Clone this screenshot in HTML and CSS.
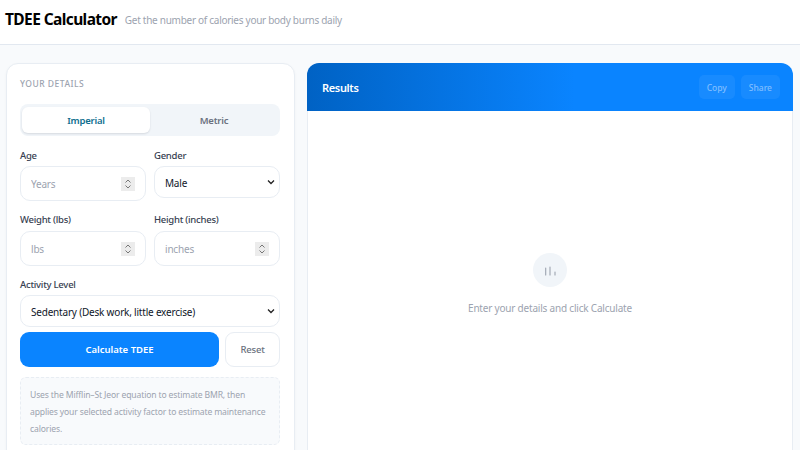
FILE: index.html
```html
<!DOCTYPE html>
<html lang="en">
<head>
<meta charset="UTF-8">
<title>TDEE Calculator</title>
<link rel="stylesheet" href="styles.css">
</head>
<body>
  <header class="topbar">
    <h1>TDEE Calculator</h1>
    <span class="tagline">Get the number of calories your body burns daily</span>
  </header>

  <main class="layout">
    <section class="details">
      <h2>YOUR DETAILS</h2>
      <div class="units">
        <button class="unit active">Imperial</button>
        <button class="unit">Metric</button>
      </div>

      <div class="row">
        <div class="field">
          <label>Age</label>
          <input type="number" placeholder="Years">
        </div>
        <div class="field">
          <label>Gender</label>
          <select><option>Male</option><option>Female</option></select>
        </div>
      </div>

      <div class="row">
        <div class="field">
          <label>Weight (lbs)</label>
          <input type="number" placeholder="lbs">
        </div>
        <div class="field">
          <label>Height (inches)</label>
          <input type="number" placeholder="inches">
        </div>
      </div>

      <div class="field">
        <label>Activity Level</label>
        <select class="activity"><option>Sedentary (Desk work, little exercise)</option></select>
      </div>

      <div class="actions">
        <button class="calc">Calculate TDEE</button>
        <button class="reset">Reset</button>
      </div>

      <p class="note">Uses the Mifflin–St Jeor equation to estimate BMR, then applies your selected activity factor to estimate maintenance calories.</p>
    </section>

    <section class="results">
      <div class="results-head">
        <h2>Results</h2>
        <div class="head-btns">
          <button>Copy</button>
          <button>Share</button>
        </div>
      </div>
      <div class="empty">
        <div class="empty-icon">
          <svg width="16" height="16" viewBox="0 0 16 16" fill="none" stroke="#9ca3af" stroke-width="1.1" stroke-linecap="round">
            <path d="M3.7 13V6"/><path d="M8 13V5"/><path d="M13 13v-3"/>
          </svg>
        </div>
        <p>Enter your details and click Calculate</p>
      </div>
    </section>
  </main>
</body>
</html>
```

FILE: styles.css
```css
* {
  padding: 0;
  margin: 0;
  box-sizing: border-box;
}

html, body {
  height: 450px;
  overflow: hidden;
}

body {
  background: #f8fafc;
  font-family: "Noto Sans", "Open Sans", sans-serif;
  color: #0f172a;
}

.topbar {
  height: 45px;
  padding: 0 5px 7px;
  display: flex;
  align-items: center;
  gap: 8px;
  background: #fff;
  border-bottom: 1px solid #e2e8f0;
}

.topbar h1 {
  font-size: 15.5px;
  font-weight: 700;
  letter-spacing: -.6px;
  color: #000;
}

.tagline {
  font-size: 10px;
  letter-spacing: -.28px;
  color: #9ca3af;
  padding-top: 3px;
}

.layout {
  display: grid;
  grid-template-columns: 289px 486px;
  gap: 12px;
  padding: 18px 7px 0 6px;
  align-items: start;
}

.details {
  height: 420px;
  background: #fff;
  border: 1px solid #e8edf3;
  border-radius: 12px;
  padding: 14px 14px 14px 13px;
  box-shadow: 0 1px 3px rgba(15, 23, 42, .04);
}

.details h2 {
  font-size: 8.5px;
  font-weight: 500;
  letter-spacing: .5px;
  color: #9ca3af;
  line-height: 12px;
  margin-bottom: 14px;
}

.units {
  display: grid;
  grid-template-columns: 1fr 1fr;
  height: 32px;
  padding: 3px 2px;
  background: #f1f5f9;
  border-radius: 8px;
  margin-bottom: 13px;
}

.unit {
  border: 0;
  background: none;
  font: 600 9.5px "Noto Sans", sans-serif;
  letter-spacing: -.2px;
  color: #6b7280;
  border-radius: 6px;
}

.unit.active {
  background: #fff;
  color: #0f6f8f;
  box-shadow: 0 1px 2px rgba(15, 23, 42, .12);
}

.row {
  display: grid;
  grid-template-columns: 1fr 1fr;
  gap: 8px;
  margin-bottom: 12px;
}

.field label {
  display: block;
  font-size: 9.5px;
  font-weight: 500;
  letter-spacing: -.25px;
  color: #374151;
  line-height: 14px;
  margin-bottom: 3px;
}

.row + .row label {
  margin-bottom: 4px;
}

.field input, .field select {
  width: 100%;
  height: 35px;
  background: #fff;
  border: 1px solid #e8edf3;
  border-radius: 10px;
  font-family: "Noto Sans", sans-serif;
  font-size: 10px;
  letter-spacing: -.2px;
  color: #0f172a;
  padding: 0 10px;
  outline: none;
}

.field select {
  height: 32px;
  padding-top: 1px;
  appearance: none;
  background: #fff url("data:image/svg+xml,%3Csvg xmlns='http://www.w3.org/2000/svg' width='8' height='6' viewBox='0 0 8 6'%3E%3Cpath d='M1 1.5l3 3 3-3' fill='none' stroke='%23222' stroke-width='1.3'/%3E%3C/svg%3E") no-repeat right 4px center;
}

.field input::placeholder {
  color: #9ca3af;
}

.field input::-webkit-inner-spin-button {
  -webkit-appearance: none;
  opacity: 1;
  width: 14px;
  height: 14px;
  background: #ececec url("data:image/svg+xml,%3Csvg xmlns='http://www.w3.org/2000/svg' width='14' height='14' viewBox='0 0 14 14'%3E%3Cpath d='M4.5 5.5L7 3l2.5 2.5M4.5 8.5L7 11l2.5-2.5' fill='none' stroke='%23777' stroke-width='1'/%3E%3C/svg%3E") no-repeat center;
}

.activity {
  margin-bottom: 5px;
}

.actions {
  display: flex;
  gap: 6px;
  margin-bottom: 10px;
}

.calc {
  flex: 1;
  height: 35px;
  border: 0;
  border-radius: 9px;
  background: #0a84ff;
  color: #fff;
  font: 600 9.5px "Noto Sans", sans-serif;
}

.reset {
  width: 55px;
  height: 35px;
  background: #fff;
  border: 1px solid #e8edf3;
  border-radius: 9px;
  color: #6b7280;
  font: 500 9.5px "Noto Sans", sans-serif;
  letter-spacing: -.2px;
}

.note {
  padding: 9px 9px;
  height: 68px;
  background: #f8fafc;
  border: 1px dashed #e8edf3;
  border-radius: 6px;
  font-size: 8.6px;
  letter-spacing: -.15px;
  line-height: 17px;
  color: #9ca3af;
}

.results {
  height: 420px;
  background: #fff;
  border-radius: 12px 12px 0 0;
  overflow: hidden;
}

.results-head {
  height: 48px;
  padding: 0 13px 0 15px;
  display: flex;
  align-items: center;
  justify-content: space-between;
  background: linear-gradient(90deg, #0062c4, #0a84ff 55%);
}

.results-head h2 {
  font-size: 11px;
  font-weight: 600;
  letter-spacing: -.35px;
  color: #fff;
}

.head-btns {
  display: flex;
  gap: 6px;
}

.head-btns button {
  height: 24px;
  padding: 0 8px;
  border: 0;
  border-radius: 5px;
  background: rgba(255, 255, 255, .06);
  color: rgba(255, 255, 255, .45);
  font: 500 8.5px "Noto Sans", sans-serif;
}

.empty {
  height: 372px;
  border: 1px solid #e8edf3;
  border-top: 0;
  display: flex;
  flex-direction: column;
  align-items: center;
  padding-top: 142px;
}

.empty-icon {
  width: 34px;
  height: 34px;
  border-radius: 50%;
  background: #f1f5f9;
  display: flex;
  align-items: center;
  justify-content: center;
  margin-bottom: 14px;
}

.empty p {
  font-size: 10px;
  letter-spacing: -.2px;
  color: #9ca3af;
}
```
